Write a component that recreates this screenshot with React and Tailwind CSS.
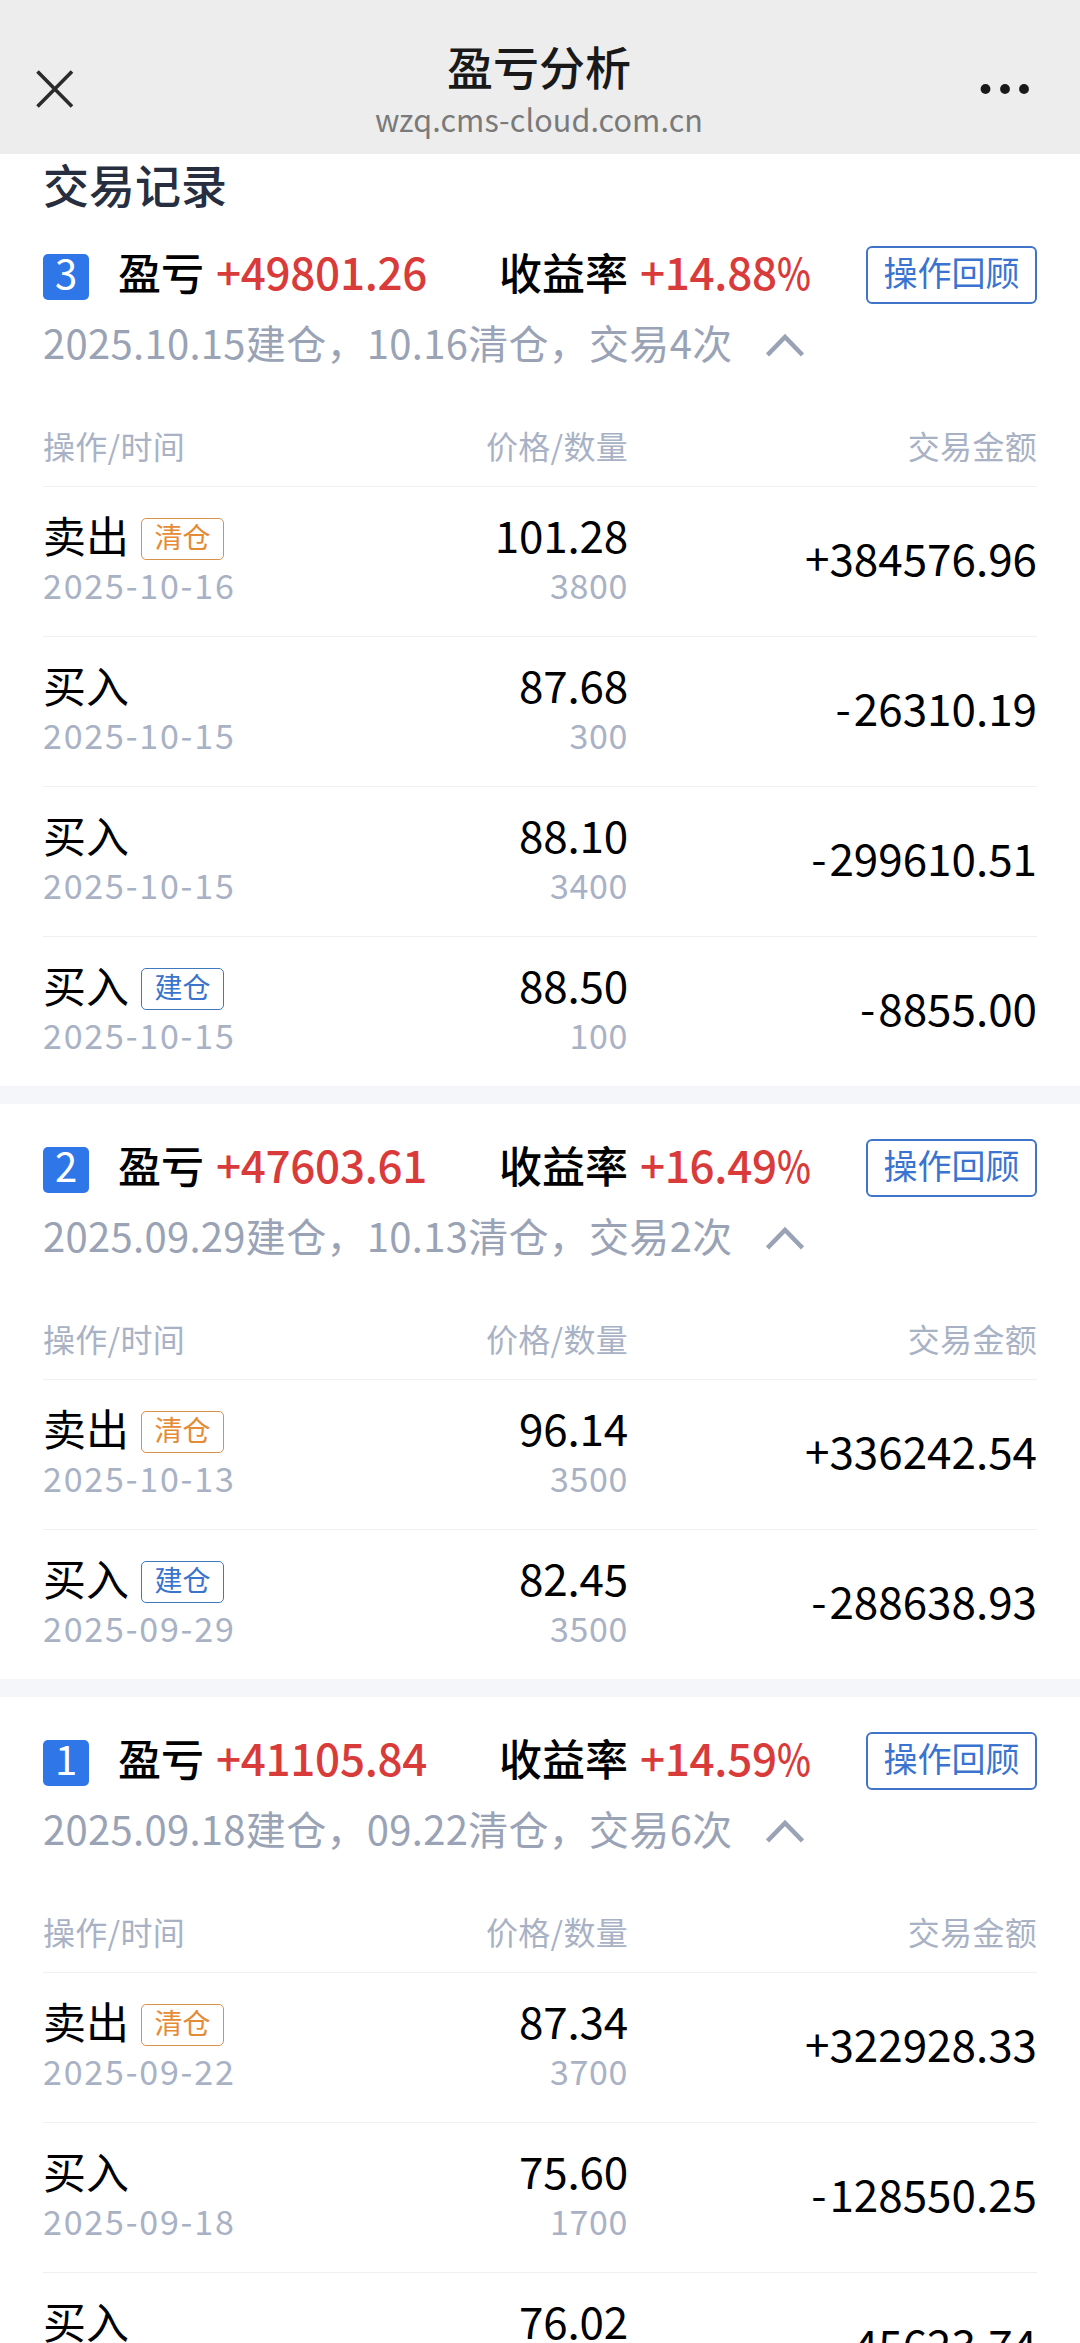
import React from "react";

const records = [
  {
    id: 3,
    profit: "+49801.26",
    rate: "+14.88",
    summary: "2025.10.15建仓，10.16清仓，交易4次",
    trades: [
      { type: "卖出", tag: "清仓", date: "2025-10-16", price: "101.28", count: "3800", amount: "+384576.96" },
      { type: "买入", date: "2025-10-15", price: "87.68", count: "300", amount: "-26310.19" },
      { type: "买入", date: "2025-10-15", price: "88.10", count: "3400", amount: "-299610.51" },
      { type: "买入", tag: "建仓", date: "2025-10-15", price: "88.50", count: "100", amount: "-8855.00" },
    ],
  },
  {
    id: 2,
    profit: "+47603.61",
    rate: "+16.49",
    summary: "2025.09.29建仓，10.13清仓，交易2次",
    trades: [
      { type: "卖出", tag: "清仓", date: "2025-10-13", price: "96.14", count: "3500", amount: "+336242.54" },
      { type: "买入", tag: "建仓", date: "2025-09-29", price: "82.45", count: "3500", amount: "-288638.93" },
    ],
  },
  {
    id: 1,
    profit: "+41105.84",
    rate: "+14.59",
    summary: "2025.09.18建仓，09.22清仓，交易6次",
    trades: [
      { type: "卖出", tag: "清仓", date: "2025-09-22", price: "87.34", count: "3700", amount: "+322928.33" },
      { type: "买入", date: "2025-09-18", price: "75.60", count: "1700", amount: "-128550.25" },
      { type: "买入", date: "2025-09-18", price: "76.02", count: "600", amount: "-45623.74" },
    ],
  },
];

const tagColors = {
  清仓: "border-[#d9924a] text-[#e58a35]",
  建仓: "border-[#3f78bd] text-[#3a74cc]",
};

function NavBar() {
  return (
    <header className="h-[154px] shrink-0 bg-[#ededed] flex items-start px-9">
      <svg className="w-[38px] h-[38px] mt-[70px]" viewBox="0 0 38 38" fill="none" stroke="#2b2b2b" strokeWidth="3.6">
        <path d="M1.5 1.5 36 36.5M36 1.5 1.5 36.5" />
      </svg>
      <div className="flex-1 flex flex-col items-center pt-[34px] pl-[24px]">
        <h1 className="text-[46px] leading-[62px] font-medium text-[#191919]">盈亏分析</h1>
        <p className="text-[30.5px] leading-[46px] tracking-[0.1px] text-[#7a7a7a]">wzq.cms-cloud.com.cn</p>
      </div>
      <svg className="w-[64px] h-[12px] mt-[83px]" viewBox="0 0 64 12" fill="#191919">
        <circle cx="5.5" cy="6" r="4.9" />
        <circle cx="25" cy="6" r="4.9" />
        <circle cx="44" cy="6" r="4.9" />
      </svg>
    </header>
  );
}

function Trade({ trade }) {
  const isSell = trade.type === "卖出";

  return (
    <div className="grid grid-cols-[285px_300px_1fr] h-[150px] border-t border-[#f0f0f0] first-of-type:border-[#e9e9e9] pt-[17px]">
      <div>
        <div className="flex items-center h-[60px]">
          <span className="text-[43px] leading-[60px] text-black">{trade.type}</span>
          {trade.tag && (
            <span className={`ml-3 mt-[9px] w-[83px] h-[42px] rounded-[5px] border text-center text-[28px] leading-[35px] ${tagColors[trade.tag]}`}>
              {trade.tag}
            </span>
          )}
        </div>
        <div className="text-[34px] leading-[41px] tracking-[1.8px] text-[#a9b2c5]">{trade.date}</div>
      </div>
      <div className="text-right">
        <div className="text-[44px] leading-[60px] tracking-[-0.2px] text-black">{trade.price}</div>
        <div className="text-[34px] leading-[41px] tracking-[0.6px] text-[#a9b2c5]">{trade.count}</div>
      </div>
      <div className="text-right text-[44px] leading-[58px] pt-6 text-black">
        <span className={isSell ? "" : "tracking-[3px]"}>{trade.amount[0]}</span>
        {trade.amount.slice(1)}
      </div>
    </div>
  );
}

function Record({ record }) {
  return (
    <section className="px-[43px]">
      <div className="h-[275px] pt-[35px]">
        <div className="flex items-center h-[58px]">
          <span className="mt-1 w-[46px] h-[46px] rounded-[5px] bg-[#2f77e9] text-white text-center text-[40px] leading-[36px]">
            {record.id}
          </span>
          <div className="-mt-2 ml-[29px] w-[381px] flex items-center text-[43px] leading-[58px] font-medium text-black">
            盈亏<span className="ml-[12px] text-[44px] tracking-[-0.3px] text-[#d93b3b]">{record.profit}</span>
          </div>
          <div className="-mt-2 flex items-center text-[43px] leading-[58px] font-medium text-black">
            收益率
            <span className="ml-[12px] text-[44px] tracking-[-0.3px] text-[#d93b3b]">
              {record.rate}
              <span className="inline-block origin-left scale-x-[0.82]">%</span>
            </span>
          </div>
          <button className="ml-auto w-[171px] h-[58px] shrink-0 rounded-[6px] border-2 border-[#3f74c8] text-[34px] leading-[48px] pb-1.5 text-[#3a74d0]">
            操作回顾
          </button>
        </div>
        <div className="mt-[13px] flex items-center h-[50px] text-[#9aa3b5]">
          <span className="text-[40px] leading-[50px] tracking-[0.3px]">{record.summary}</span>
          <svg className="ml-[34px] mt-[5px] w-[38px] h-6" viewBox="0 0 38 24" fill="none" stroke="currentColor" strokeWidth="4.6">
            <path d="M1.5 22 19 4 36.5 22" />
          </svg>
        </div>
        <div className="mt-[54px] grid grid-cols-[285px_300px_1fr] text-[32px] leading-[48px] tracking-[0.3px] text-[#a9b2c5]">
          <span>操作/时间</span>
          <span className="text-right">价格/数量</span>
          <span className="text-right">交易金额</span>
        </div>
      </div>
      {record.trades.map((trade, i) => (
        <Trade key={i} trade={trade} />
      ))}
    </section>
  );
}

function App() {
  return (
    <div className="w-[1080px] h-[2343px] overflow-hidden flex flex-col bg-white font-['Noto_Sans_CJK_SC',sans-serif]">
      <NavBar />
      <main className="flex flex-col">
        <h2 className="h-[57px] px-[43px] text-[46px] leading-[58px] font-medium text-[#272e40]">交易记录</h2>
        <div className="flex flex-col gap-[18px] bg-[#f4f6fa] *:bg-white">
          {records.map((record) => (
            <Record key={record.id} record={record} />
          ))}
        </div>
      </main>
    </div>
  );
}

export default App;
